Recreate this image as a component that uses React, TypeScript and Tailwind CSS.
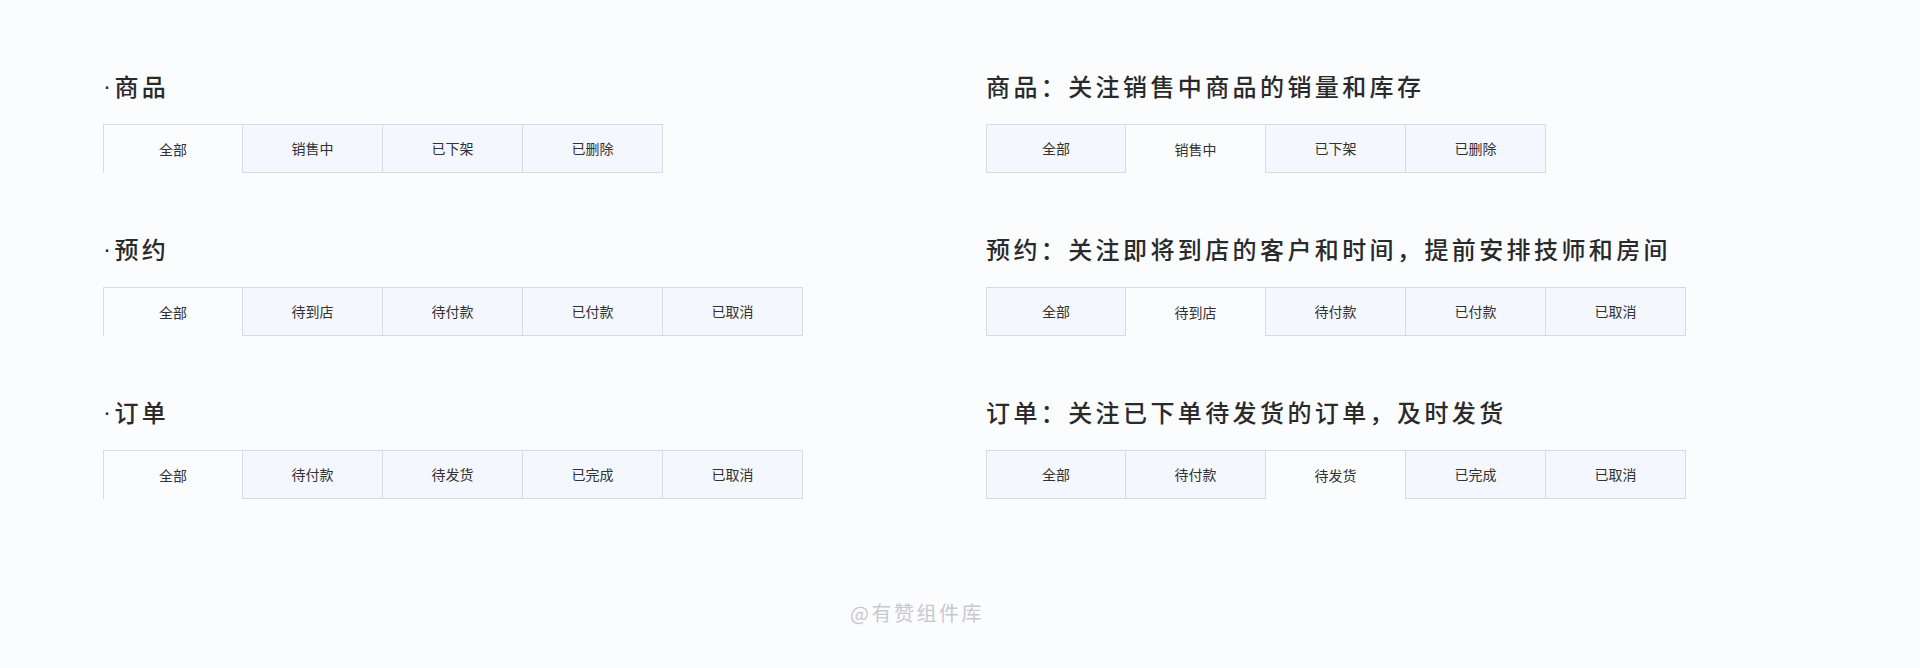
const sections = [
  {
    title: '商品',
    desc: '商品：关注销售中商品的销量和库存',
    tabs: ['全部', '销售中', '已下架', '已删除'],
    active: 1,
  },
  {
    title: '预约',
    desc: '预约：关注即将到店的客户和时间，提前安排技师和房间',
    tabs: ['全部', '待到店', '待付款', '已付款', '已取消'],
    active: 1,
  },
  {
    title: '订单',
    desc: '订单：关注已下单待发货的订单，及时发货',
    tabs: ['全部', '待付款', '待发货', '已完成', '已取消'],
    active: 2,
  },
];

const Tabs = ({ tabs, active }: { tabs: string[]; active: number }) => (
  <div className="flex">
    {tabs.map((tab, i) => (
      <div
        key={tab}
        className={
          'w-[140px] h-[49px] flex items-center justify-center text-[14px] text-[#323233] border-t border-r border-[#d9dbde] ' +
          (i === 0 ? 'border-l ' : '') +
          (i === active ? 'bg-[#fbfcfe]' : 'bg-[#f4f7fd] border-b')
        }
      >
        {tab}
      </div>
    ))}
  </div>
);

const Heading = ({ children }: { children: React.ReactNode }) => (
  <h2 className="h-8 flex items-center text-[24px] leading-8 font-medium tracking-[3.4px] text-[#2a2a2b] mb-[22px] whitespace-nowrap">
    {children}
  </h2>
);

export default function App() {
  return (
    <div className="min-h-screen w-full bg-[#fbfcfe] font-['Noto_Sans_CJK_SC',sans-serif]">
      <div className="flex pt-[70px] pl-[103px]">
        <div className="w-[883px] flex flex-col gap-[60px]">
          {sections.map((s) => (
            <div key={s.title}>
              <Heading>
                <span className="font-['Liberation_Sans',sans-serif] leading-8">·</span>
                <span>{s.title}</span>
              </Heading>
              <Tabs tabs={s.tabs} active={0} />
            </div>
          ))}
        </div>
        <div className="flex flex-col gap-[60px]">
          {sections.map((s) => (
            <div key={s.title}>
              <Heading>{s.desc}</Heading>
              <Tabs tabs={s.tabs} active={s.active} />
            </div>
          ))}
        </div>
      </div>
      <div className="pl-[850px] mt-[100px] text-[20px] leading-7 tracking-[2.5px] text-[#c8c9cc]">
        @有赞组件库
      </div>
    </div>
  );
}
